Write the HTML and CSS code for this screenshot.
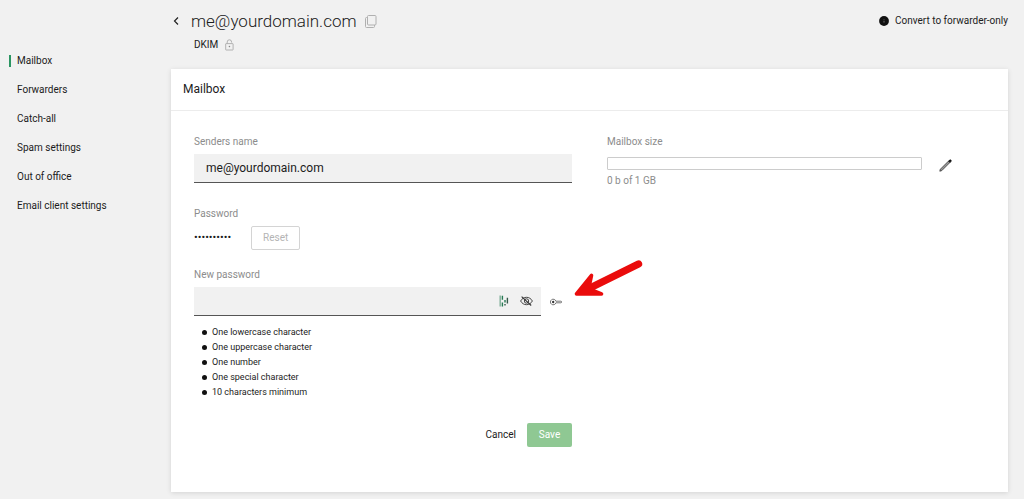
FILE: index.html
```html
<!DOCTYPE html>
<html lang="en">
<head>
    <meta charset="UTF-8">
    <meta name="viewport" content="width=device-width, initial-scale=1.0">
    <title>Mailbox - me@yourdomain.com</title>
    <link rel="stylesheet" href="styles.css">
</head>
<body>
    <div class="layout">
        <!-- Side navigation -->
        <nav class="sidebar">
            <a href="#mailbox" class="nav-link active">Mailbox</a>
            <a href="#forwarders" class="nav-link">Forwarders</a>
            <a href="#catch-all" class="nav-link">Catch-all</a>
            <a href="#spam" class="nav-link">Spam settings</a>
            <a href="#out-of-office" class="nav-link">Out of office</a>
            <a href="#client" class="nav-link">Email client settings</a>
        </nav>

        <main class="main">
            <header class="page-header">
                <div class="title-row">
                    <a href="#back" class="back" aria-label="Back">
                        <svg width="6" height="10" viewBox="0 0 6 10"><path d="M5 1.5 1.5 5 5 8.5" fill="none" stroke="#222" stroke-width="1.2" /></svg>
                    </a>
                    <h1>me@yourdomain.com</h1>
                    <button type="button" class="icon-button" aria-label="Copy address">
                        <svg width="12" height="13" viewBox="0 0 12 13" fill="none" stroke="#b0b0b0">
                            <rect x="2.5" y=".5" width="8.5" height="9.5" rx="1" />
                            <path d="M2.5 2.5h-1a1 1 0 0 0-1 1v8a1 1 0 0 0 1 1h7a1 1 0 0 0 1-1V10" />
                        </svg>
                    </button>
                    <button type="button" class="convert">
                        <svg width="10" height="10" viewBox="0 0 10 10"><circle cx="5" cy="5" r="4.9" fill="#111" /><path d="M5 3.4v.7M5 4.8v1.8" stroke="#888" stroke-width=".8" /></svg>
                        Convert to forwarder-only
                    </button>
                </div>
                <div class="dkim">
                    DKIM
                    <svg width="9" height="12" viewBox="0 0 9 12" fill="none" stroke="#aaa" stroke-width=".9">
                        <rect x=".7" y="4.6" width="7.4" height="6.4" rx=".4" />
                        <path d="M2.2 4.6V3a2.2 2.2 0 0 1 4.4 0v.6" />
                        <circle cx="4.4" cy="7.6" r=".5" fill="#777" stroke="#777" stroke-width=".4" />
                    </svg>
                </div>
            </header>

            <section class="card">
                <h2>Mailbox</h2>
                <form class="card-body">
                    <div class="column">
                        <label for="sender">Senders name</label>
                        <input type="text" id="sender" class="text-input" value="me@yourdomain.com">

                        <div class="label password-label">Password</div>
                        <div class="password-row">
                            <span class="dots">••••••••••</span>
                            <button type="button" class="reset">Reset</button>
                        </div>

                        <label for="new-password">New password</label>
                        <div class="new-password-row">
                            <div class="input-group">
                                <input type="password" id="new-password">
                                <!-- Password strength -->
                                <svg width="10" height="12" viewBox="0 0 10 12" fill="none" stroke-width="1.4">
                                    <path d="M1.2.5v11" stroke="#7fae98" />
                                    <path d="M3.4.8v4M3.4 7.6v4M6 5v2.4" stroke="#257a53" />
                                    <path d="M6 9v1.6M8.4 2.8v5.8" stroke="#36594a" />
                                </svg>
                                <button type="button" class="icon-button" aria-label="Show password">
                                    <svg width="13" height="10" viewBox="0 0 13 10" fill="none" stroke="#333" stroke-width=".9">
                                        <path d="M.6 5C2 2.6 4 1.3 6.5 1.3S11 2.6 12.4 5C11 7.4 9 8.7 6.5 8.7S2 7.4.6 5Z" />
                                        <circle cx="6.5" cy="5" r="2.2" />
                                        <path d="m1.6.7 9.6 8.8" stroke-width="1.1" />
                                    </svg>
                                </button>
                            </div>
                            <button type="button" class="icon-button" aria-label="Generate password">
                                <svg width="12" height="8" viewBox="0 0 12 8" fill="none" stroke="#555" stroke-width=".8">
                                    <path d="M5.9 3.2A2.8 2.8 0 1 0 5.9 4.8H10.8a.8.8 0 0 0 0-1.6Z" />
                                    <circle cx="3.2" cy="4" r=".8" fill="#111" stroke="#111" />
                                </svg>
                            </button>
                            <!-- Arrow pointing at the generate button -->
                            <svg class="arrow" width="72" height="42" viewBox="0 0 72 42" fill="#ea0c0c" stroke="#ea0c0c" stroke-linejoin="round" stroke-linecap="round">
                                <path d="M66.5 6 20 29" stroke-width="7.4" />
                                <path d="M4.5 36 19.5 17.5 17.5 27 22 33 29.5 36Z" stroke-width="3.6" />
                            </svg>
                        </div>

                        <ul class="rules">
                            <li>One lowercase character</li>
                            <li>One uppercase character</li>
                            <li>One number</li>
                            <li>One special character</li>
                            <li>10 characters minimum</li>
                        </ul>

                        <div class="actions">
                            <button type="button" class="cancel">Cancel</button>
                            <button type="submit" class="save">Save</button>
                        </div>
                    </div>

                    <div class="column">
                        <label for="size">Mailbox size</label>
                        <div class="size-row">
                            <progress id="size" value="0" max="1"></progress>
                            <button type="button" class="icon-button" aria-label="Edit mailbox size">
                                <svg width="13" height="17" viewBox="0 -4 13 17">
                                    <path d="m.8 12.2.6-2 8-8 1.4 1.4-8 8Z" fill="#999" stroke="#333" stroke-width=".8" />
                                    <path d="m9.5 2.1 1-1a1 1 0 0 1 1.5 1.5l-1 1Z" fill="#111" stroke="#111" stroke-width=".6" />
                                </svg>
                            </button>
                        </div>
                        <div class="label">0 b of 1 GB</div>
                    </div>
                </form>
            </section>
        </main>
    </div>
</body>
</html>
```
FILE: styles.css
```css
* {
    box-sizing: border-box;
}

body {
    margin: 0;
    background: #f1f1f1;
    color: #1c1c1c;
    font-family: Roboto, "Liberation Sans", sans-serif;
    font-size: 10px;
    line-height: 14px;
}

button,
input {
    margin: 0;
    padding: 0;
    border: 0;
    background: none;
    color: inherit;
    font: inherit;
}

svg {
    display: block;
    flex: none;
}

.layout {
    display: grid;
    grid-template-columns: 162px 1fr;
    padding: 0 16px 7px 9px;
}

/* Sidebar */
.sidebar {
    display: flex;
    flex-direction: column;
    gap: 17px;
    padding-top: 55px;
}

.nav-link {
    padding-left: 6px;
    border-left: 2px solid #f1f1f1;
    line-height: 12px;
    color: inherit;
    text-decoration: none;
}

.nav-link.active {
    border-color: #2b9562;
}

/* Page header */
.page-header {
    height: 69px;
    padding-top: 10px;
}

.title-row {
    display: flex;
    align-items: center;
    height: 22px;
}

.back {
    margin: 0 12px 0 2px;
}

h1 {
    margin: 0 8px 0 0;
    font-size: 17px;
    font-weight: 300;
    line-height: 22px;
}

.icon-button {
    display: flex;
}

.convert {
    display: flex;
    align-items: center;
    gap: 6px;
    margin-left: auto;
}

.dkim {
    display: flex;
    align-items: center;
    gap: 7px;
    margin-top: 6px;
    padding-left: 23px;
}

/* Card */
.card {
    background: #fff;
    box-shadow: 0 1px 5px rgba(0, 0, 0, 0.12);
}

h2 {
    margin: 0;
    padding: 0 12px;
    border-bottom: 1px solid #ececec;
    font-size: 12px;
    font-weight: 400;
    line-height: 41px;
}

.card-body {
    display: grid;
    grid-template-columns: 1fr 1fr;
    gap: 35px;
    padding: 24px 23px 45px;
}

label,
.label {
    display: block;
    color: #8c8c8c;
}

.text-input,
.input-group {
    height: 29px;
    background: #f1f1f1;
    border-bottom: 1px solid #555;
}

.text-input {
    display: block;
    width: 100%;
    margin-top: 5px;
    padding: 0 12px;
    font-size: 12px;
}

.password-label {
    margin-top: 24px;
}

.password-row {
    display: flex;
    align-items: center;
    gap: 20px;
    margin: 5px 0 18px;
}

.dots {
    font-size: 11px;
}

.reset {
    width: 49px;
    height: 24px;
    border: 1px solid #d4d4d4;
    border-radius: 2px;
    color: #b4b4b4;
}

.new-password-row {
    position: relative;
    display: flex;
    align-items: center;
    gap: 9px;
    margin-top: 5px;
}

.input-group {
    display: flex;
    flex: 1;
    align-items: center;
    gap: 11px;
    padding-right: 8px;
}

.input-group input {
    flex: 1;
    min-width: 0;
    height: 28px;
    padding-left: 12px;
}

.new-password-row > .icon-button {
    margin-right: 10px;
}

.arrow {
    position: absolute;
    left: 100%;
    bottom: 16px;
}

.rules {
    margin: 9px 0 23px;
    padding-left: 8px;
    font-size: 9px;
    line-height: 15px;
    list-style: none;
}

.rules li {
    display: flex;
    align-items: center;
    gap: 5px;
}

.rules li::before {
    content: "";
    width: 5px;
    height: 5px;
    border-radius: 50%;
    background: #111;
}

.actions {
    display: flex;
    justify-content: flex-end;
    gap: 11px;
}

.save {
    width: 45px;
    height: 24px;
    border-radius: 2px;
    background: #8fc893;
    color: #fff;
}

/* Mailbox size */
.size-row {
    display: flex;
    align-items: center;
    gap: 17px;
    margin: 6px 33px 2px 0;
}

progress {
    flex: 1;
    min-width: 0;
    height: 13px;
    appearance: none;
    border: 1px solid #ccc;
    border-radius: 1px;
    background: #fff;
}

progress::-webkit-progress-bar {
    background: #fff;
}

progress::-webkit-progress-value {
    background: #8fc893;
}
```
